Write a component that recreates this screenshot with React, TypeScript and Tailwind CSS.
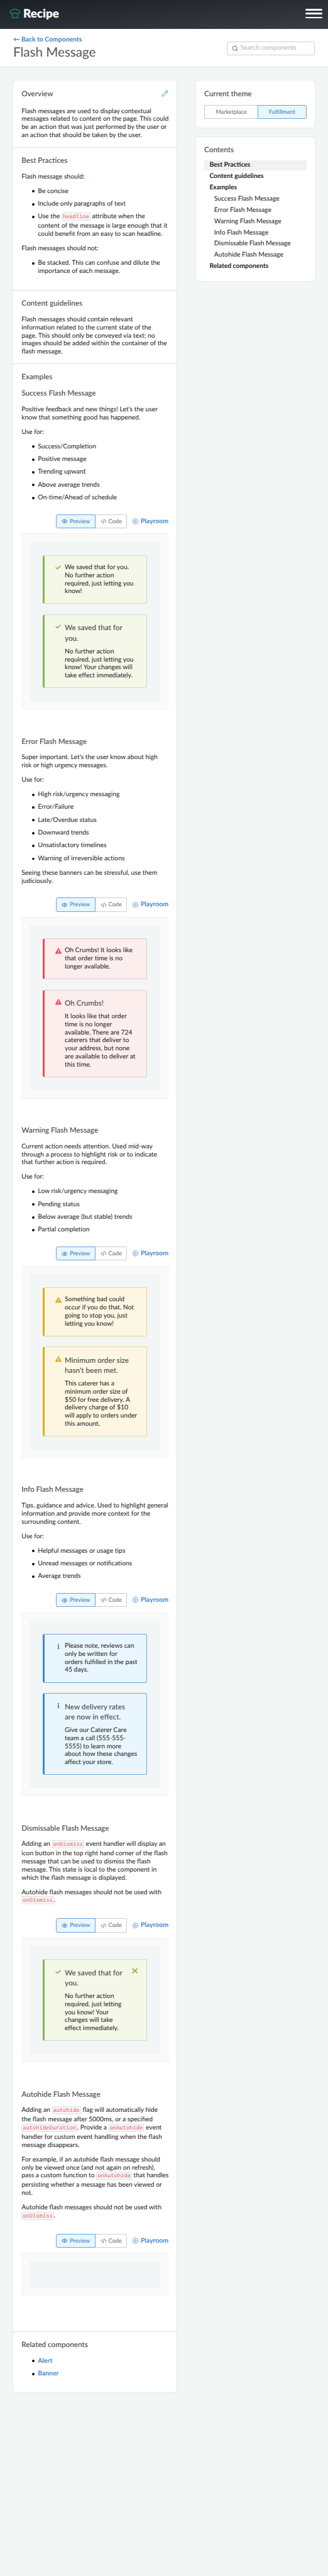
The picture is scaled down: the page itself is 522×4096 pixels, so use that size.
import type { ReactNode } from "react";
import { CirclePlay, Eye, Pencil, Search } from "lucide-react";
import { FaExclamationTriangle, FaInfo } from "react-icons/fa";

type Tone = "success" | "error" | "warning" | "info";

const toneBox: Record<Tone, string> = {
  success: "bg-[#f5f7e8] border-[#cfdcc0] border-l-[#8ab54e]",
  error: "bg-[#fdeeee] border-[#e9c3cb] border-l-[#f04b54]",
  warning: "bg-[#fcf6e3] border-[#ecd78f] border-l-[#e0ac0b]",
  info: "bg-[#e9f6fe] border-[#76a6d6] border-l-[#4088cc]",
};

function ToneIcon({ tone }: { tone: Tone }) {
  if (tone === "success")
    return (
      <svg viewBox="0 0 14 10" className="h-[6.6px] w-[9.2px] text-[#8ab54e]" fill="none" stroke="currentColor" strokeWidth="2.6">
        <path d="M1 4.6 5 8.2 13 1.2" />
      </svg>
    );
  if (tone === "info") return <FaInfo className="size-[8px] text-[#3a8ad6]" />;
  return (
    <FaExclamationTriangle
      className={tone === "error" ? "size-[10px] text-[#f04b54]" : "size-[10px] text-[#e5a91f]"}
    />
  );
}

function Rows({ rows }: { rows: ReactNode[] }) {
  return (
    <>
      {rows.map((row, i) => (
        <span key={i} className="block whitespace-nowrap">
          {row}
        </span>
      ))}
    </>
  );
}

function Flash({ tone, title, dismiss, rows }: { tone: Tone; title?: string[]; dismiss?: boolean; rows: string[] }) {
  return (
    <div className={`flex rounded-[3px] border border-l-[3.3px] py-[12.4px] pr-[13.8px] pl-[15.5px] ${toneBox[tone]}`}>
      <div className="flex h-[12.7px] w-[16px] shrink-0 items-center">
        <span className="flex w-[12px] justify-center">
          <ToneIcon tone={tone} />
        </span>
      </div>
      <div className="min-w-0 flex-1">
        {title && (
          <h4 className="mb-[6.8px] text-[11.7px] leading-[16.4px] font-semibold text-[#5a5a5a]">
            <Rows rows={title} />
          </h4>
        )}
        <p>
          <Rows rows={rows} />
        </p>
      </div>
      {dismiss && (
        <div className="flex h-[10.4px] shrink-0 items-center">
          <svg viewBox="0 0 14 14" className="size-[9.4px] text-[#8ab54e]" fill="none" stroke="currentColor" strokeWidth="2.6">
            <path d="M1 1.5 13 12.5M13 1.5 1 12.5" />
          </svg>
        </div>
      )}
    </div>
  );
}

function Code({ children }: { children: ReactNode }) {
  return (
    <code className="mb-[2.1px] inline-block h-[12.9px] rounded-[2px] border border-[#dfe3e3] bg-[#f7f4f4] px-[0.9px] align-baseline font-['Liberation_Mono',monospace] text-[8.82px] leading-[13.6px] text-[#ea5a68]">
      {children}
    </code>
  );
}

function H({ children, className = "mb-[11px]" }: { children: ReactNode; className?: string }) {
  return <h3 className={`text-[11.7px] leading-[15.9px] font-semibold text-[#565656] ${className}`}>{children}</h3>;
}

function P({ rows, className = "mb-[10.2px]" }: { rows: ReactNode[]; className?: string }) {
  return (
    <p className={className}>
      <Rows rows={rows} />
    </p>
  );
}

function List({ items }: { items: ReactNode[][] }) {
  return (
    <ul className="mb-[10.2px] flex flex-col gap-[7.64px]">
      {items.map((rows, i) => (
        <li key={i} className="flex">
          <span className="flex h-[12.7px] w-[26px] shrink-0 items-center pt-[0.6px] pl-[16.6px]">
            <span className="size-[3.9px] rounded-full bg-[#111]" />
          </span>
          <div>
            <Rows rows={rows} />
          </div>
        </li>
      ))}
    </ul>
  );
}

function CodeGlyph() {
  return (
    <svg viewBox="0 0 30 24" className="h-[8px] w-[10px]" fill="none" stroke="currentColor" strokeWidth="2.8" strokeLinecap="round">
      <path d="M8 6 2 12l6 6M22 6l6 6-6 6M18 2l-6 20" />
    </svg>
  );
}

function Preview({ children }: { children?: ReactNode }) {
  return (
    <div className="mb-[43.2px] pt-[10px]">
      <div className="flex h-[22.2px] justify-end text-[9.17px]">
        <div className="flex w-[63px] items-center justify-center gap-[3.6px] rounded-l-[3px] border border-[#6ba3da] bg-[#e8f6fe] text-[#3577c0]">
          <Eye className="size-[9.6px]" strokeWidth={2.4} />
          Preview
        </div>
        <div className="flex w-[50.2px] items-center justify-center gap-[3px] rounded-r-[3px] border border-l-0 border-[#cbcdd0] text-[#6a6a6a]">
          <CodeGlyph />
          Code
        </div>
        <div className="ml-[8.4px] flex items-center gap-[3.4px] text-[10.45px] font-bold text-[#4489c8]">
          <CirclePlay className="size-[9.8px]" strokeWidth={2.2} />
          Playroom
        </div>
      </div>
      <div className="mt-[8.3px] border border-[#f3f3f3] bg-[#fafafa] p-[12px]">
        <div className="flex flex-col gap-[16.5px] bg-[#f2f6f6] p-[21.2px]">{children}</div>
      </div>
    </div>
  );
}

const contents: { label: string; kind: "active" | "top" | "sub" }[] = [
  { label: "Best Practices", kind: "active" },
  { label: "Content guidelines", kind: "top" },
  { label: "Examples", kind: "top" },
  { label: "Success Flash Message", kind: "sub" },
  { label: "Error Flash Message", kind: "sub" },
  { label: "Warning Flash Message", kind: "sub" },
  { label: "Info Flash Message", kind: "sub" },
  { label: "Dismissable Flash Message", kind: "sub" },
  { label: "Autohide Flash Message", kind: "sub" },
  { label: "Related components", kind: "top" },
];

const contentClass = {
  active: "bg-[#f1f1f1] pl-[8.3px] font-bold",
  top: "pl-[8.3px] font-bold",
  sub: "pl-[15.7px]",
};

export default function App() {
  return (
    <div className="h-[4096px] w-[522px] overflow-hidden bg-[#f2f7f6] font-['Lato',sans-serif] text-[10.34px] leading-[12.73px] text-[#1c1c1c] [text-rendering:geometricPrecision]">
      <header className="flex h-[45.7px] items-center justify-between bg-gradient-to-br from-[#1b1f26] to-[#3a3d45] pr-[9px] pb-[2.5px] pl-[15px]">
        <div className="flex items-center gap-[4px]">
          <svg viewBox="0 0 26 22" className="h-[15px] w-[18px]" fill="none" stroke="#1f9468" strokeWidth="1.7" strokeLinejoin="round" strokeLinecap="round">
            <path d="M6.5 20.8v-9.3C-.5 11-.5 3.5 6.5 3.6c1.5-3.8 11-3.8 13 0 6.5-.1 6.5 7.4 0 7.9v9.3zM6.5 11.5c2.5 0 3.5-1 3.8-2.5 1.2 2.2 4.8 2.2 6 0 .3 1.5 1.3 2.5 3.3 2.5" />
          </svg>
          <span className="text-[18.8px] leading-[24px] font-extrabold text-white">Recipe</span>
        </div>
        <div className="flex w-[27px] flex-col gap-[3.7px]">
          <span className="h-[2.8px] rounded-full bg-white" />
          <span className="h-[2.8px] rounded-full bg-white" />
          <span className="h-[2.8px] rounded-full bg-white" />
        </div>
      </header>
      <div className="flex h-[61.5px] items-start justify-between border-b border-[#e3e5e6] bg-white px-[21px]">
        <div className="pt-[10px]">
          <div className="text-[10.4px] leading-[15px] font-bold text-[#3c84c6]">← Back to Components</div>
          <h1 className="text-[20.6px] leading-[25.5px] text-[#585858]">Flash Message</h1>
        </div>
        <div className="mt-[20px] flex h-[22.2px] w-[140px] items-center gap-[4px] rounded-[3px] border border-[#cfd1d3] pl-[6.5px] text-[10.36px] text-[#b4b6b8]">
          <Search className="size-[10px] text-[#777]" strokeWidth={2.5} />
          Search components
        </div>
      </div>
      <div className="flex items-start gap-[30.5px] pt-[21.1px] pl-[20.9px]">
        <main className="w-[260.5px] divide-y divide-[#dcdfdf] rounded-[4px] bg-white shadow-[0_0_2px_rgba(0,0,0,0.18)]">
          <section className="px-[13.4px] pt-[13.3px] pb-[12px]">
            <div className="flex items-start justify-between">
              <H className="mb-[13.2px]">Overview</H>
              <Pencil className="mt-[1px] size-[11px] text-[#4489c8]" />
            </div>
            <P
              className=""
              rows={[
                "Flash messages are used to display contextual",
                "messages related to content on the page. This could",
                "be an action that was just performed by the user or",
                "an action that should be taken by the user.",
              ]}
            />
          </section>
          <section className="px-[13.4px] pt-[13.3px] pb-[13.2px]">
            <H>Best Practices</H>
            <P rows={["Flash message should:"]} />
            <List
              items={[
                ["Be concise"],
                ["Include only paragraphs of text"],
                [
                  <>
                    Use the <Code>headline</Code> attribute when the
                  </>,
                  "content of the message is large enough that it",
                  "could benefit from an easy to scan headline.",
                ],
              ]}
            />
            <P rows={["Flash messages should not:"]} />
            <List items={[["Be stacked. This can confuse and dilute the", "importance of each message."]]} />
          </section>
          <section className="px-[13.4px] pt-[13.3px] pb-[11.8px]">
            <H>Content guidelines</H>
            <P
              className=""
              rows={[
                "Flash messages should contain relevant",
                "information related to the current state of the",
                "page. This should only be conveyed via text; no",
                "images should be added within the container of the",
                "flash message.",
              ]}
            />
          </section>
          <section className="px-[13.4px] pt-[13.8px] pb-[12.7px]">
            <H className="mb-[9.9px]">Examples</H>

            <H>Success Flash Message</H>
            <P rows={["Positive feedback and new things! Let's the user", "know that something good has happened."]} />
            <P rows={["Use for:"]} />
            <List
              items={[
                ["Success/Completion"],
                ["Positive message"],
                ["Trending upward"],
                ["Above average trends"],
                ["On-time/Ahead of schedule"],
              ]}
            />
            <Preview>
              <Flash tone="success" rows={["We saved that for you.", "No further action", "required, just letting you", "know!"]} />
              <Flash
                tone="success"
                title={["We saved that for", "you."]}
                rows={["No further action", "required, just letting you", "know! Your changes will", "take effect immediately."]}
              />
            </Preview>

            <H>Error Flash Message</H>
            <P rows={["Super important. Let's the user know about high", "risk or high urgency messages."]} />
            <P rows={["Use for:"]} />
            <List
              items={[
                ["High risk/urgency messaging"],
                ["Error/Failure"],
                ["Late/Overdue status"],
                ["Downward trends"],
                ["Unsatisfactory timelines"],
                ["Warning of irreversible actions"],
              ]}
            />
            <P rows={["Seeing these banners can be stressful, use them", "judiciously."]} />
            <Preview>
              <Flash tone="error" rows={["Oh Crumbs! It looks like", "that order time is no", "longer available."]} />
              <Flash
                tone="error"
                title={["Oh Crumbs!"]}
                rows={[
                  "It looks like that order",
                  "time is no longer",
                  "available. There are 724",
                  "caterers that deliver to",
                  "your address, but none",
                  "are available to deliver at",
                  "this time.",
                ]}
              />
            </Preview>

            <H>Warning Flash Message</H>
            <P
              rows={[
                "Current action needs attention. Used mid-way",
                "through a process to highlight risk or to indicate",
                "that further action is required.",
              ]}
            />
            <P rows={["Use for:"]} />
            <List
              items={[
                ["Low risk/urgency messaging"],
                ["Pending status"],
                ["Below average (but stable) trends"],
                ["Partial completion"],
              ]}
            />
            <Preview>
              <Flash tone="warning" rows={["Something bad could", "occur if you do that. Not", "going to stop you, just", "letting you know!"]} />
              <Flash
                tone="warning"
                title={["Minimum order size", "hasn't been met."]}
                rows={[
                  "This caterer has a",
                  "minimum order size of",
                  "$50 for free delivery. A",
                  "delivery charge of $10",
                  "will apply to orders under",
                  "this amount.",
                ]}
              />
            </Preview>

            <H>Info Flash Message</H>
            <P
              rows={[
                "Tips, guidance and advice. Used to highlight general",
                "information and provide more context for the",
                "surrounding content.",
              ]}
            />
            <P rows={["Use for:"]} />
            <List items={[["Helpful messages or usage tips"], ["Unread messages or notifications"], ["Average trends"]]} />
            <Preview>
              <Flash tone="info" rows={["Please note, reviews can", "only be written for", "orders fulfilled in the past", "45 days."]} />
              <Flash
                tone="info"
                title={["New delivery rates", "are now in effect."]}
                rows={[
                  "Give our Caterer Care",
                  "team a call (555-555-",
                  "5555) to learn more",
                  "about how these changes",
                  "affect your store.",
                ]}
              />
            </Preview>

            <H>Dismissable Flash Message</H>
            <P
              rows={[
                <>
                  Adding an <Code>onDismiss</Code> event handler will display an
                </>,
                "icon button in the top right hand corner of the flash",
                "message that can be used to dismiss the flash",
                "message. This state is local to the component in",
                "which the flash message is displayed.",
              ]}
            />
            <P
              rows={[
                "Autohide flash messages should not be used with",
                <>
                  <Code>onDismiss</Code>.
                </>,
              ]}
            />
            <Preview>
              <Flash
                tone="success"
                title={["We saved that for", "you."]}
                dismiss
                rows={["No further action", "required, just letting", "you know! Your", "changes will take", "effect immediately."]}
              />
            </Preview>

            <H>Autohide Flash Message</H>
            <P
              rows={[
                <>
                  Adding an <Code>autohide</Code> flag will automatically hide
                </>,
                "the flash message after 5000ms, or a specified",
                <>
                  <Code>autohideDuration</Code>. Provide a <Code>onAutohide</Code> event
                </>,
                "handler for custom event handling when the flash",
                "message disappears.",
              ]}
            />
            <P
              rows={[
                "For example, if an autohide flash message should",
                "only be viewed once (and not again on refresh),",
                <>
                  pass a custom function to <Code>onAutohide</Code> that handles
                </>,
                "persisting whether a message has been viewed or",
                "not.",
              ]}
            />
            <P
              rows={[
                "Autohide flash messages should not be used with",
                <>
                  <Code>onDismiss</Code>.
                </>,
              ]}
            />
            <Preview />
          </section>
          <section className="px-[13.4px] pt-[13.3px] pb-[12.7px]">
            <H>Related components</H>
            <List
              items={[
                [<span className="font-bold text-[#4489c8]">Alert</span>],
                [<span className="font-bold text-[#4489c8]">Banner</span>],
              ]}
            />
          </section>
        </main>
        <aside className="flex w-[189px] flex-col gap-[15.5px]">
          <div className="rounded-[4px] bg-white px-[13.2px] pt-[13.3px] pb-[13.2px] shadow-[0_0_2px_rgba(0,0,0,0.18)]">
            <H className="mb-[9.8px]">Current theme</H>
            <div className="flex h-[22.2px] text-[9.17px]">
              <div className="flex w-[85px] items-center justify-center rounded-l-[3px] border border-r-0 border-[#cbcdd0] text-[#6a6a6a]">
                Marketplace
              </div>
              <div className="flex flex-1 items-center justify-center rounded-r-[3px] border border-[#6ba3da] bg-[#e8f6fe] text-[#3577c0]">
                Fulfillment
              </div>
            </div>
          </div>
          <div className="rounded-[4px] bg-white px-[13.2px] pt-[13.3px] pb-[14.9px] shadow-[0_0_2px_rgba(0,0,0,0.18)]">
            <H className="mb-[7.9px]">Contents</H>
            <ul className="flex flex-col gap-[2.5px]">
              {contents.map((c) => (
                <li key={c.label} className={`h-[15.4px] leading-[15.4px] ${contentClass[c.kind]}`}>
                  {c.label}
                </li>
              ))}
            </ul>
          </div>
        </aside>
      </div>
    </div>
  );
}
